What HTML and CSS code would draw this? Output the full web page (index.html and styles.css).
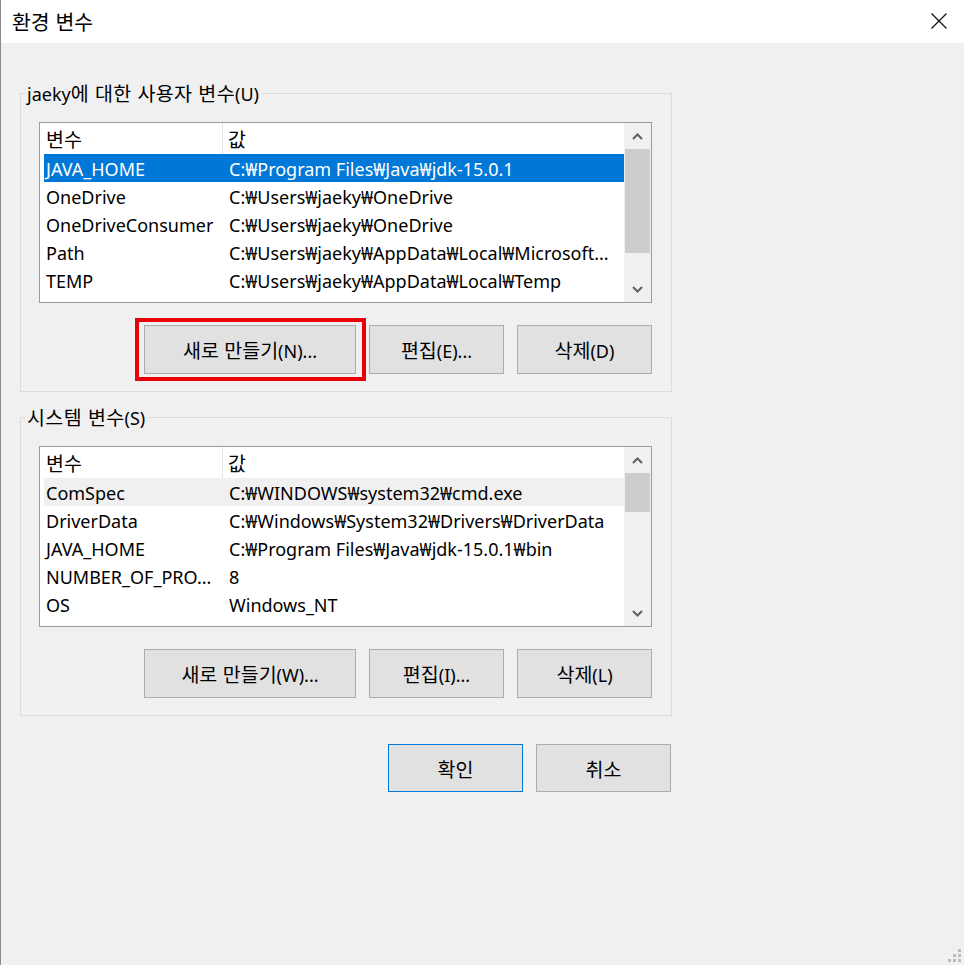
FILE: index.html
```html
<!DOCTYPE html>
<html lang="ko">
<head>
<meta charset="utf-8">
<title>환경 변수</title>
<link rel="stylesheet" href="styles.css">
</head>
<body>
<div class="window">
  <div class="titlebar">
    <span class="title">환경 변수</span>
    <svg class="close" width="16" height="16" viewBox="0 0 16 16"><path d="M0.5 0.5 L15.5 15.5 M15.5 0.5 L0.5 15.5" stroke="#111" stroke-width="1.3" fill="none"/></svg>
  </div>
  <div class="content">
    <fieldset class="group">
      <legend class="group-label">jaeky<span class="ko">에 대한 사용자 변수</span>(U)</legend>
      <div class="group-inner">
        <div class="listview">
          <div class="lv-main">
            <div class="lv-header">
              <div class="hcol hcol-name"><span class="ko">변수</span></div>
              <div class="hcol hcol-val"><span class="ko">값</span></div>
            </div>
            <div class="lv-row selected"><span class="c-name">JAVA_HOME</span><span class="c-val">C:₩Program Files₩Java₩jdk-15.0.1</span></div>
            <div class="lv-row"><span class="c-name">OneDrive</span><span class="c-val">C:₩Users₩jaeky₩OneDrive</span></div>
            <div class="lv-row"><span class="c-name">OneDriveConsumer</span><span class="c-val">C:₩Users₩jaeky₩OneDrive</span></div>
            <div class="lv-row"><span class="c-name">Path</span><span class="c-val">C:₩Users₩jaeky₩AppData₩Local₩Microsoft...</span></div>
            <div class="lv-row"><span class="c-name">TEMP</span><span class="c-val">C:₩Users₩jaeky₩AppData₩Local₩Temp</span></div>
          </div>
          <div class="scrollbar">
            <div class="sb-btn"><svg width="11" height="7" viewBox="0 0 11 7"><path d="M1 6 L5.5 1.5 L10 6" stroke="#606060" stroke-width="2" fill="none"/></svg></div>
            <div class="sb-track"><div class="sb-thumb" style="height:104px"></div></div>
            <div class="sb-btn"><svg width="11" height="7" viewBox="0 0 11 7"><path d="M1 1 L5.5 5.5 L10 1" stroke="#606060" stroke-width="2" fill="none"/></svg></div>
          </div>
        </div>
        <div class="btn-row">
          <button class="btn btn-wide marked"><span class="ko">새로 만들기</span>(N)...</button>
          <button class="btn"><span class="ko">편집</span>(E)...</button>
          <button class="btn"><span class="ko">삭제</span>(D)</button>
        </div>
      </div>
    </fieldset>

    <fieldset class="group group-system">
      <legend class="group-label"><span class="ko">시스템 변수</span>(S)</legend>
      <div class="group-inner">
        <div class="listview">
          <div class="lv-main">
            <div class="lv-header">
              <div class="hcol hcol-name"><span class="ko">변수</span></div>
              <div class="hcol hcol-val"><span class="ko">값</span></div>
            </div>
            <div class="lv-row inactive"><span class="c-name">ComSpec</span><span class="c-val">C:₩WINDOWS₩system32₩cmd.exe</span></div>
            <div class="lv-row"><span class="c-name">DriverData</span><span class="c-val">C:₩Windows₩System32₩Drivers₩DriverData</span></div>
            <div class="lv-row"><span class="c-name">JAVA_HOME</span><span class="c-val">C:₩Program Files₩Java₩jdk-15.0.1₩bin</span></div>
            <div class="lv-row"><span class="c-name">NUMBER_OF_PRO...</span><span class="c-val">8</span></div>
            <div class="lv-row"><span class="c-name">OS</span><span class="c-val">Windows_NT</span></div>
          </div>
          <div class="scrollbar">
            <div class="sb-btn"><svg width="11" height="7" viewBox="0 0 11 7"><path d="M1 6 L5.5 1.5 L10 6" stroke="#606060" stroke-width="2" fill="none"/></svg></div>
            <div class="sb-track"><div class="sb-thumb" style="height:39px"></div></div>
            <div class="sb-btn"><svg width="11" height="7" viewBox="0 0 11 7"><path d="M1 1 L5.5 5.5 L10 1" stroke="#606060" stroke-width="2" fill="none"/></svg></div>
          </div>
        </div>
        <div class="btn-row">
          <button class="btn btn-wide"><span class="ko">새로 만들기</span>(W)...</button>
          <button class="btn"><span class="ko">편집</span>(I)...</button>
          <button class="btn"><span class="ko">삭제</span>(L)</button>
        </div>
      </div>
    </fieldset>

    <div class="dialog-buttons">
      <button class="btn btn-default"><span class="ko">확인</span></button>
      <button class="btn"><span class="ko">취소</span></button>
    </div>
  </div>
  <svg class="grip" width="13" height="13" viewBox="0 0 13 13">
    <rect x="10" y="0" width="3" height="3" fill="#bdbdbd"/>
    <rect x="5" y="5" width="3" height="3" fill="#bdbdbd"/>
    <rect x="10" y="5" width="3" height="3" fill="#bdbdbd"/>
    <rect x="0" y="10" width="3" height="3" fill="#bdbdbd"/>
    <rect x="5" y="10" width="3" height="3" fill="#bdbdbd"/>
    <rect x="10" y="10" width="3" height="3" fill="#bdbdbd"/>
  </svg>
</div>
</body>
</html>
```

FILE: styles.css
```css
* { box-sizing: border-box; }

html, body {
  margin: 0;
  padding: 0;
  background: #f0f0f0;
}

body {
  font-family: "Noto Sans", "Noto Sans CJK KR", sans-serif;
  font-size: 18px;
  color: #000;
}

.ko {
  font-family: "Noto Sans CJK KR", sans-serif;
  font-size: 19.5px;
}

.window {
  position: relative;
  min-height: 100vh;
  border-left: 1px solid #8a8a8a;
  background: #f0f0f0;
}

.titlebar {
  height: 43px;
  background: #fff;
  display: flex;
  align-items: center;
  justify-content: space-between;
  padding: 0 17px 0 11px;
}

.title {
  font-family: "Noto Sans CJK KR", sans-serif;
  font-size: 20.5px;
  line-height: 43px;
}

.close {
  display: block;
  margin-top: -2px;
}

.content {
  padding: 38px 0 0 19px;
}

.group {
  width: 652px;
  margin: 0;
  padding: 0;
  border: 1px solid #dcdcdc;
}

.group-system {
  margin-top: 13px;
}

.group-label {
  margin-left: 4px;
  padding: 0 2px;
  height: 24px;
  line-height: 24px;
  font-size: 18px;
}

.group-label .ko {
  letter-spacing: 0.4px;
}

.group-inner {
  padding: 17px 19px 17px 18px;
}

.listview {
  display: flex;
  height: 181px;
  border: 1px solid #9a9a9a;
  background: #fff;
  overflow: hidden;
}

.lv-main {
  flex: 1;
  padding-left: 4px;
}

.lv-header {
  display: flex;
  height: 31px;
  line-height: 31px;
}

.hcol-name {
  width: 179px;
  padding-left: 2px;
  border-right: 1px solid #e5e5e5;
}

.hcol-val {
  padding-left: 5px;
}

.lv-row {
  display: flex;
  height: 28px;
  line-height: 30px;
  white-space: nowrap;
}

.lv-row.selected {
  background: #0078d7;
  color: #fff;
}

.lv-row.inactive {
  background: #f0f0f0;
}

.c-name {
  width: 185px;
  padding-left: 2px;
  overflow: hidden;
}

.c-val {
  padding-left: 0;
}

.scrollbar {
  width: 27px;
  display: flex;
  flex-direction: column;
  background: #f0f0f0;
}

.sb-btn {
  height: 26px;
  display: flex;
  align-items: center;
  justify-content: center;
  flex: none;
}

.sb-btn svg { display: block; }

.sb-track {
  flex: 1;
  padding: 0 1px;
}

.sb-thumb {
  background: #cdcdcd;
}

.btn-row {
  display: flex;
  justify-content: flex-end;
  gap: 13px;
  margin-top: 22px;
}

.btn {
  width: 135px;
  height: 49px;
  font-family: "Noto Sans", "Noto Sans CJK KR", sans-serif;
  font-size: 18px;
  color: #000;
  background: #e1e1e1;
  border: 1px solid #adadad;
  padding: 0;
  margin: 0;
}

.btn-wide {
  width: 212px;
}

.marked {
  position: relative;
}

.marked::after {
  content: "";
  position: absolute;
  top: -8px;
  bottom: -8px;
  left: -10px;
  right: -11px;
  border: 4px solid #e8000b;
}

.btn-default {
  border-color: #0078d7;
}

.dialog-buttons {
  width: 652px;
  display: flex;
  justify-content: flex-end;
  gap: 13px;
  padding-right: 1px;
  margin-top: 28px;
}

.dialog-buttons .btn {
  height: 48px;
}

.grip {
  position: absolute;
  right: 3px;
  bottom: 3px;
  display: block;
}
```
